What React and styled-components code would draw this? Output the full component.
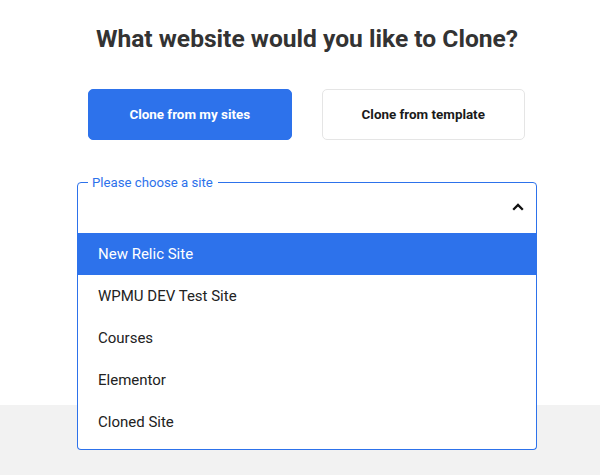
import React from "react";
import styled, { createGlobalStyle } from "styled-components";

const Global = createGlobalStyle`
  html, body { margin: 0; padding: 0; background: #fff; }
  body { font-family: Roboto, "Noto Sans", Arial, sans-serif; }
  * { box-sizing: border-box; }
`;

const Page = styled.div`
  width: 600px;
  height: 475px;
  display: flex;
  flex-direction: column;
  overflow: hidden;
`;

const Main = styled.section`
  background: #fff;
  padding: 25px 0 0 77px;
  height: 405px;
  position: relative;
  z-index: 1;
`;

const Footer = styled.footer`
  flex: 1;
  background: #f2f2f2;
`;

const Content = styled.div`
  width: 460px;
  display: flex;
  flex-direction: column;
`;

const Title = styled.h1`
  margin: 0;
  font-size: 24.6px;
  line-height: 28px;
  font-weight: 700;
  color: #333;
  text-align: center;
`;

const ButtonRow = styled.div`
  margin-top: 36px;
  padding: 0 12px 0 11px;
  display: grid;
  grid-template-columns: 1fr 1fr;
  gap: 30px;
`;

const ChoiceButton = styled.button`
  height: 51px;
  border-radius: 5px;
  border: 1px solid ${(p) => (p.$active ? "#2d72eb" : "#e5e5e5")};
  background: ${(p) => (p.$active ? "#2d72eb" : "#fff")};
  color: ${(p) => (p.$active ? "#fff" : "#1a1a1a")};
  font-family: Roboto, Arial, sans-serif;
  font-size: 13.4px;
  font-weight: 700;
  cursor: pointer;
`;

const SelectWrap = styled.div`
  position: relative;
  margin-top: 35px;
`;

const Fieldset = styled.fieldset`
  margin: 0;
  padding: 0 12px 0 0;
  border: 1px solid #2d72eb;
  border-radius: 4px 4px 0 0;
  height: 59px;
`;

const Legend = styled.legend`
  margin-left: 10px;
  padding: 0 5px 0 4px;
  font-size: 13.2px;
  line-height: 15px;
  color: #2d72eb;
`;

const Trigger = styled.div`
  height: 34px;
  display: flex;
  align-items: center;
  justify-content: flex-end;
`;

const Menu = styled.ul`
  position: absolute;
  top: 58px;
  left: 0;
  right: 0;
  margin: 0;
  padding: 0 0 6px;
  list-style: none;
  background: #fff;
  border: 1px solid #2d72eb;
  border-top: none;
  border-radius: 0 0 4px 4px;
`;

const Option = styled.li`
  height: 42px;
  line-height: 42px;
  margin: 0 ${(p) => (p.$selected ? "-1px" : "0")};
  font-size: 15px;
  color: ${(p) => (p.$selected ? "#fff" : "#222")};
  background: ${(p) => (p.$selected ? "#2d72eb" : "transparent")};
  padding-left: ${(p) => (p.$selected ? "21px" : "20px")};
`;

const sites = ["New Relic Site", "WPMU DEV Test Site", "Courses", "Elementor", "Cloned Site"];

export default function App() {
  return (
    <Page>
      <Global />
      <Main>
        <Content>
          <Title>What website would you like to Clone?</Title>
          <ButtonRow>
            <ChoiceButton $active>Clone from my sites</ChoiceButton>
            <ChoiceButton>Clone from template</ChoiceButton>
          </ButtonRow>
          <SelectWrap>
            <Fieldset>
              <Legend>Please choose a site</Legend>
              <Trigger>
                <svg width="12" height="8" viewBox="0 0 12 8">
                  <path d="M1.2 6.8 L6 2 L10.8 6.8" fill="none" stroke="#111" strokeWidth="2.3" />
                </svg>
              </Trigger>
            </Fieldset>
            <Menu>
              {sites.map((s, i) => (
                <Option key={s} $selected={i === 0}>{s}</Option>
              ))}
            </Menu>
          </SelectWrap>
        </Content>
      </Main>
      <Footer />
    </Page>
  );
}
